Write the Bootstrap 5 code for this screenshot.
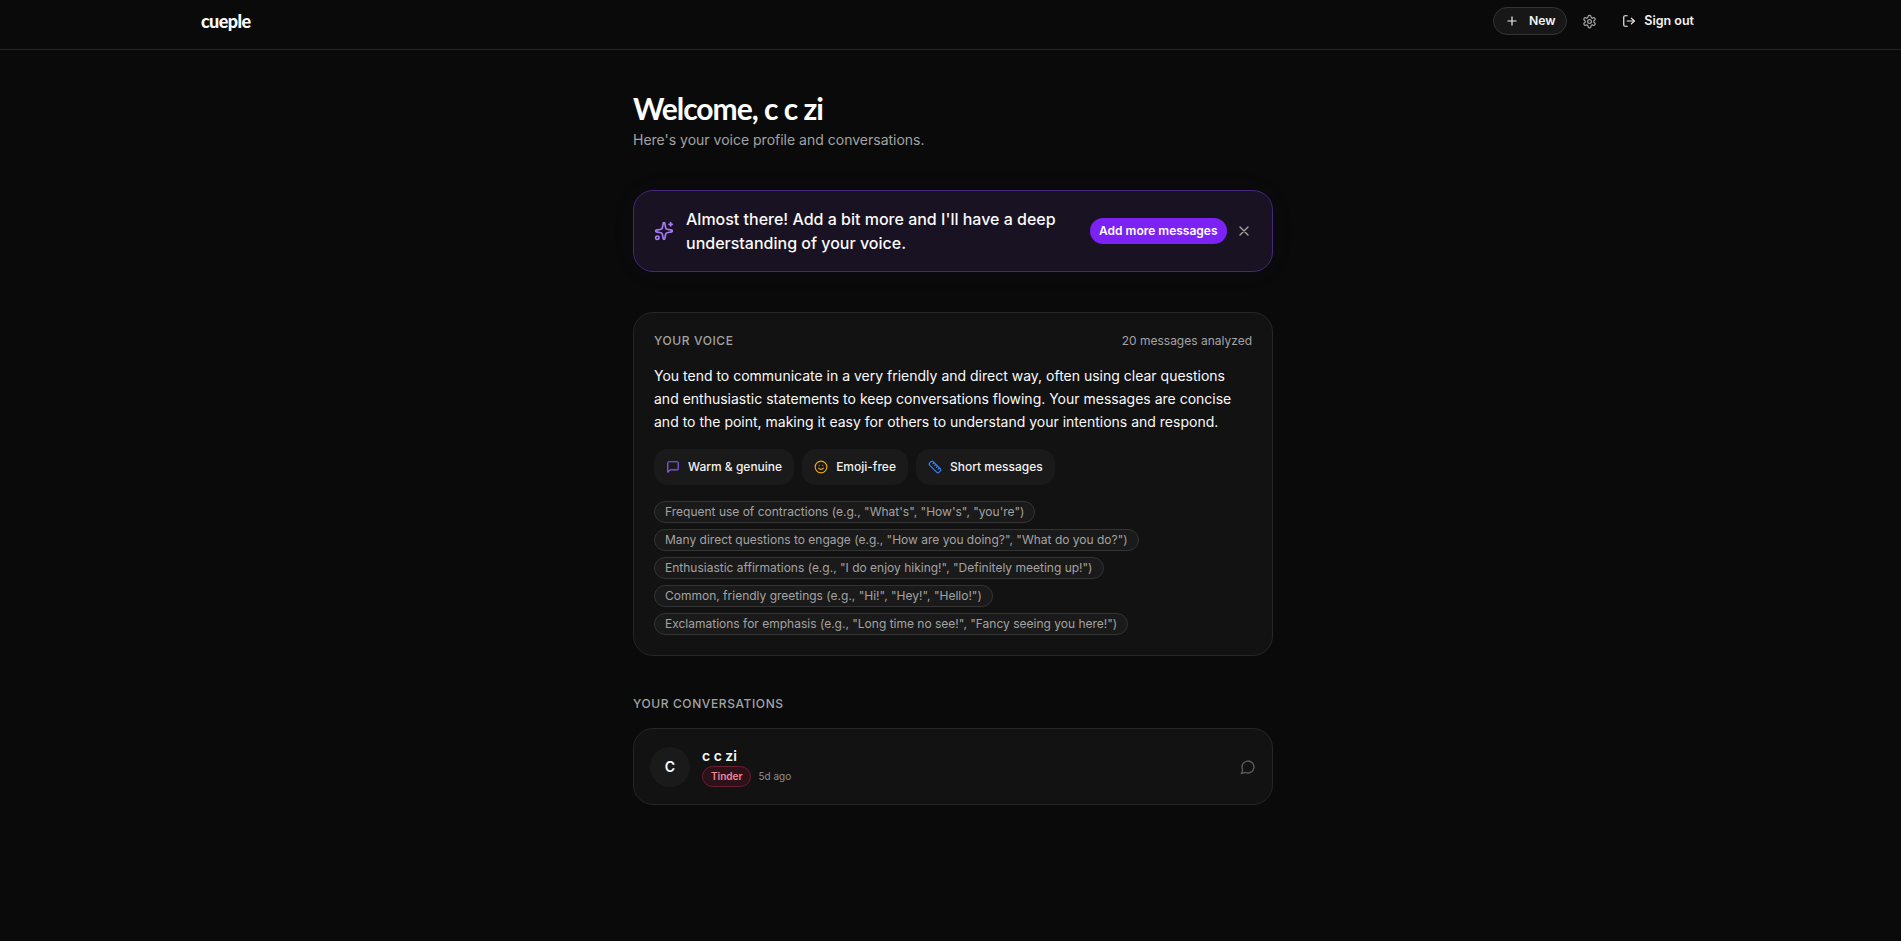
<!DOCTYPE html>
<html lang="en">
  <head>
    <meta charset="UTF-8" />
    <meta name="viewport" content="width=device-width, initial-scale=1" />
    <title>cueple</title>
    <link href="https://cdn.jsdelivr.net/npm/bootstrap@5.3.3/dist/css/bootstrap.min.css" rel="stylesheet" />
    <style>
      body {
        background-color: #0a0a0a;
        color: #fafafa;
        font-family: "Inter", "Liberation Sans", sans-serif;
        min-height: 941px;
      }
      .top-bar {
        height: 50px;
        border-bottom: 1px solid #262626;
        padding: 7px 207px 0 201px;
      }
      .brand-name {
        font-family: "Lato", sans-serif;
        font-weight: 900;
        font-size: 18px;
        line-height: 28px;
        letter-spacing: -0.6px;
        color: #fafafa;
      }
      .new-btn {
        height: 28px;
        width: 74px;
        border: 1px solid #333;
        background: #171717;
        border-radius: 14px;
        font-size: 12.25px;
        font-weight: 600;
        color: #f2f2f2;
        gap: 10px;
      }
      .gear-icon {
        margin-left: 15px;
      }
      .signout-link {
        margin-left: 25px;
        font-size: 12.5px;
        font-weight: 600;
        color: #f2f2f2;
        gap: 8px;
      }
      .page-col {
        width: 640px;
        margin-left: 633px;
      }
      .welcome-title {
        font-family: "Lato", sans-serif;
        font-weight: 700;
        font-size: 30px;
        line-height: 36px;
        letter-spacing: -1px;
        color: #fff;
        margin: 0;
        padding-top: 40px;
        box-sizing: content-box;
      }
      .welcome-sub {
        font-size: 14px;
        line-height: 20px;
        color: #a3a3a3;
        margin: 4px 0 0;
      }
      .hint-box {
        height: 82px;
        margin-top: 40px;
        padding: 0 20px;
        gap: 12px;
        background: #181222;
        border: 1px solid #45287a;
        border-radius: 20px;
        box-shadow: 0 0 30px rgba(124, 58, 237, 0.04);
      }
      .hint-text {
        font-size: 16px;
        line-height: 24px;
        font-weight: 500;
        color: #fafafa;
        width: 392px;
        margin: 0;
      }
      .hint-btn {
        height: 26px;
        padding: 0 9.5px;
        background: #7c22f5;
        color: #fff;
        border-radius: 13px;
        border: 0;
        font-size: 12px;
        font-weight: 600;
        white-space: nowrap;
      }
      .close-icon {
        margin-left: 9px;
      }
      .voice-box {
        margin-top: 40px;
        height: 344px;
        padding: 20px;
        background: #121212;
        border: 1px solid #262626;
        border-radius: 20px;
      }
      .voice-label {
        font-size: 12px;
        line-height: 16px;
        letter-spacing: 0.6px;
        font-weight: 500;
        color: #a3a3a3;
      }
      .voice-count {
        font-size: 12px;
        line-height: 16px;
        color: #a3a3a3;
      }
      .voice-copy {
        font-size: 14px;
        line-height: 23px;
        font-weight: 400;
        color: #fafafa;
        margin: 15px 0 0;
      }
      .trait-row {
        margin-top: 16px;
        gap: 8px;
      }
      .trait-chip {
        height: 36px;
        padding: 0 12px;
        gap: 8px;
        background: #1a1a1a;
        border-radius: 14px;
        font-size: 12px;
        font-weight: 500;
        color: #f2f2f2;
      }
      .phrase-list {
        margin-top: 16px;
        gap: 6px;
      }
      .phrase-chip {
        height: 22px;
        padding: 0 10px;
        border: 1px solid #333;
        background: #1a1a1a;
        border-radius: 11px;
        font-size: 12px;
        color: #a3a3a3;
        white-space: nowrap;
      }
      .convo-heading {
        font-size: 12px;
        line-height: 16px;
        letter-spacing: 0.6px;
        font-weight: 500;
        color: #a3a3a3;
        margin-top: 40px;
      }
      .convo-box {
        margin-top: 16px;
        height: 77px;
        padding: 0 16px;
        background: #121212;
        border: 1px solid #262626;
        border-radius: 20px;
        gap: 12px;
      }
      .convo-avatar {
        width: 40px;
        height: 40px;
        border-radius: 50%;
        background: #1a1a1a;
        font-size: 14px;
        font-weight: 600;
        color: #fafafa;
      }
      .convo-name {
        font-size: 14px;
        line-height: 20px;
        font-weight: 600;
        color: #fafafa;
      }
      .tinder-tag {
        height: 21px;
        padding: 0 8px;
        border: 1px solid #6b1f33;
        background: #2c1118;
        border-radius: 11px;
        font-size: 10px;
        font-weight: 600;
        color: #f0879b;
      }
      .convo-time {
        font-size: 10px;
        color: #8f8f8f;
        margin-left: -1px;
      }
    </style>
  </head>
  <body>

    <!-- Header -->
    <nav class="top-bar d-flex justify-content-between align-items-start">
      <span class="brand-name">cueple</span>
      <div class="d-flex align-items-center">
        <a class="new-btn d-flex align-items-center justify-content-center text-decoration-none" href="#">
          <svg width="14" height="14" viewBox="0 0 24 24" fill="none" stroke="currentColor" stroke-width="2" stroke-linecap="round"><path d="M5 12h14M12 5v14"/></svg>
          New
        </a>
        <svg class="gear-icon" width="15" height="15" viewBox="0 0 24 24" fill="none" stroke="#a3a3a3" stroke-width="2" stroke-linecap="round" stroke-linejoin="round"><path d="M12.22 2h-.44a2 2 0 0 0-2 2v.18a2 2 0 0 1-1 1.73l-.43.25a2 2 0 0 1-2 0l-.15-.08a2 2 0 0 0-2.73.73l-.22.38a2 2 0 0 0 .73 2.73l.15.1a2 2 0 0 1 1 1.72v.51a2 2 0 0 1-1 1.74l-.15.09a2 2 0 0 0-.73 2.73l.22.38a2 2 0 0 0 2.73.73l.15-.08a2 2 0 0 1 2 0l.43.25a2 2 0 0 1 1 1.73V20a2 2 0 0 0 2 2h.44a2 2 0 0 0 2-2v-.18a2 2 0 0 1 1-1.73l.43-.25a2 2 0 0 1 2 0l.15.08a2 2 0 0 0 2.73-.73l.22-.39a2 2 0 0 0-.73-2.73l-.15-.08a2 2 0 0 1-1-1.74v-.5a2 2 0 0 1 1-1.74l.15-.09a2 2 0 0 0 .73-2.73l-.22-.38a2 2 0 0 0-2.73-.73l-.15.08a2 2 0 0 1-2 0l-.43-.25a2 2 0 0 1-1-1.73V4a2 2 0 0 0-2-2z"/><circle cx="12" cy="12" r="3"/></svg>
        <a class="signout-link d-flex align-items-center text-decoration-none" href="#">
          <svg width="14" height="14" viewBox="0 0 24 24" fill="none" stroke="currentColor" stroke-width="2" stroke-linecap="round" stroke-linejoin="round"><path d="M9 21H5a2 2 0 0 1-2-2V5a2 2 0 0 1 2-2h4"/><path d="m16 17 5-5-5-5"/><path d="M21 12H9"/></svg>
          Sign out
        </a>
      </div>
    </nav>

    <div class="page-col">
      <h1 class="welcome-title">Welcome, c c zi</h1>
      <p class="welcome-sub">Here's your voice profile and conversations.</p>

      <!-- Banner -->
      <div class="hint-box d-flex align-items-center">
        <svg width="20" height="20" viewBox="0 0 24 24" fill="none" stroke="#a67cf2" stroke-width="2" stroke-linecap="round" stroke-linejoin="round" class="flex-shrink-0"><path d="M11.017 2.814a1 1 0 0 1 1.966 0l1.051 5.558a2 2 0 0 0 1.594 1.594l5.558 1.051a1 1 0 0 1 0 1.966l-5.558 1.051a2 2 0 0 0-1.594 1.594l-1.051 5.558a1 1 0 0 1-1.966 0l-1.051-5.558a2 2 0 0 0-1.594-1.594l-5.558-1.051a1 1 0 0 1 0-1.966l5.558-1.051a2 2 0 0 0 1.594-1.594z"/><path d="M20 2v4M22 4h-4"/><circle cx="4" cy="20" r="2"/></svg>
        <p class="hint-text">Almost there! Add a bit more and I'll have a deep understanding of your voice.</p>
        <div class="d-flex align-items-center ms-auto">
          <button class="hint-btn">Add more messages</button>
          <svg class="close-icon" width="16" height="16" viewBox="0 0 24 24" fill="none" stroke="#a3a3a3" stroke-width="2" stroke-linecap="round"><path d="M18 6 6 18M6 6l12 12"/></svg>
        </div>
      </div>

      <!-- Voice profile -->
      <div class="voice-box">
        <div class="d-flex justify-content-between align-items-center">
          <span class="voice-label">YOUR VOICE</span>
          <span class="voice-count">20 messages analyzed</span>
        </div>
        <p class="voice-copy">You tend to communicate in a very friendly and direct way, often using clear questions and enthusiastic statements to keep conversations flowing. Your messages are concise and to the point, making it easy for others to understand your intentions and respond.</p>
        <div class="trait-row d-flex">
          <div class="trait-chip d-flex align-items-center">
            <svg width="14" height="14" viewBox="0 0 24 24" fill="none" stroke="#8b5cf6" stroke-width="2" stroke-linecap="round" stroke-linejoin="round"><path d="M21 15a2 2 0 0 1-2 2H7l-4 4V5a2 2 0 0 1 2-2h14a2 2 0 0 1 2 2z"/></svg>
            Warm &amp; genuine
          </div>
          <div class="trait-chip d-flex align-items-center">
            <svg width="14" height="14" viewBox="0 0 24 24" fill="none" stroke="#eaa90f" stroke-width="2" stroke-linecap="round" stroke-linejoin="round"><circle cx="12" cy="12" r="10"/><path d="M8 14s1.500 2 4 2 4-2 4-2M9 9h.01M15 9h.01"/></svg>
            Emoji-free
          </div>
          <div class="trait-chip d-flex align-items-center">
            <svg width="14" height="14" viewBox="0 0 24 24" fill="none" stroke="#3b82f6" stroke-width="2" stroke-linecap="round" stroke-linejoin="round"><path d="M21.300 15.300a2.400 2.400 0 0 1 0 3.400l-2.600 2.600a2.400 2.400 0 0 1-3.400 0L2.700 8.700a2.410 2.410 0 0 1 0-3.400l2.600-2.600a2.410 2.410 0 0 1 3.400 0Z"/><path d="m14.500 12.500 2-2M11.500 9.500l2-2M8.500 6.500l2-2M17.500 15.500l2-2"/></svg>
            Short messages
          </div>
        </div>
        <div class="phrase-list d-flex flex-column align-items-start">
          <span class="phrase-chip d-flex align-items-center">Frequent use of contractions (e.g., "What's", "How's", "you're")</span>
          <span class="phrase-chip d-flex align-items-center">Many direct questions to engage (e.g., "How are you doing?", "What do you do?")</span>
          <span class="phrase-chip d-flex align-items-center">Enthusiastic affirmations (e.g., "I do enjoy hiking!", "Definitely meeting up!")</span>
          <span class="phrase-chip d-flex align-items-center">Common, friendly greetings (e.g., "Hi!", "Hey!", "Hello!")</span>
          <span class="phrase-chip d-flex align-items-center">Exclamations for emphasis (e.g., "Long time no see!", "Fancy seeing you here!")</span>
        </div>
      </div>

      <!-- Conversations -->
      <div class="convo-heading">YOUR CONVERSATIONS</div>
      <div class="convo-box d-flex align-items-center">
        <div class="convo-avatar d-flex align-items-center justify-content-center">C</div>
        <div>
          <div class="convo-name">c c zi</div>
          <div class="d-flex align-items-center gap-2">
            <span class="tinder-tag d-flex align-items-center">Tinder</span>
            <span class="convo-time">5d ago</span>
          </div>
        </div>
        <svg class="ms-auto" width="16" height="16" viewBox="0 0 24 24" fill="none" stroke="#5c5c5c" stroke-width="2" stroke-linejoin="round"><path d="M7.900 20A9 9 0 1 0 4 16.100L2 22z"/></svg>
      </div>
    </div>

    <script src="https://cdn.jsdelivr.net/npm/bootstrap@5.3.3/dist/js/bootstrap.bundle.min.js"></script>
  </body>
</html>
